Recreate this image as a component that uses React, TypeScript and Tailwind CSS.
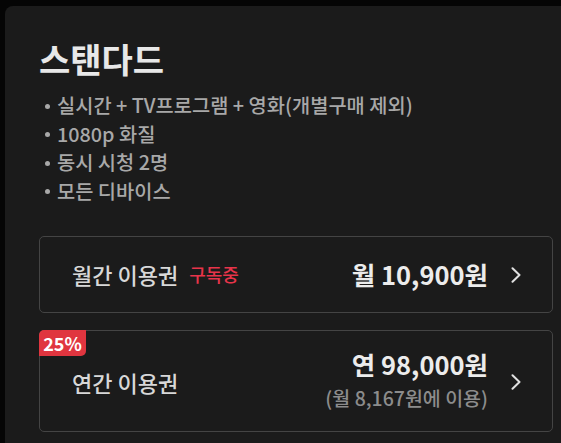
import React from "react";

const Chevron = () => (
  <svg width="10" height="16" viewBox="0 0 10 16" fill="none" className="shrink-0">
    <path d="M1.5 1.2 L8.5 8 L1.5 14.8" stroke="#e0e0e0" strokeWidth="2" strokeLinecap="round" strokeLinejoin="round" />
  </svg>
);

export default function App() {
  const font = { fontFamily: '"Noto Sans CJK KR", "Noto Sans", sans-serif' };
  return (
    <div className="w-[561px] h-[443px] overflow-hidden bg-[#050505]" style={font}>
      <div className="ml-[5px] mt-[6px] w-[582px] h-[460px] rounded-[8px] bg-[#1b1b1b] pt-[29px] pl-[34px] pr-[34px]">
        <h1 className="text-[34px] leading-[48px] font-bold text-[#e8e8e8]">스탠다드</h1>
        <ul className="mt-[8px] text-[19.8px] leading-[28.5px] font-medium text-[#a8a8a8]">
          {["실시간 + TV프로그램 + 영화(개별구매 제외)", "1080p 화질", "동시 시청 2명", "모든 디바이스"].map((t) => (
            <li key={t} className="flex items-center">
              <span className="w-[5px] h-[5px] rounded-full bg-[#a8a8a8] ml-[6px] mr-[7px] mt-[2px]" />
              <span>{t}</span>
            </li>
          ))}
        </ul>
        <div className="mt-[31px] h-[77px] w-[514px] rounded-[5px] border border-[#444444] flex items-center pl-[32px] pr-[31px]">
          <span className="text-[22px] font-medium text-[#d8d8d8]">월간 이용권</span>
          <span className="ml-[11px] text-[18px] font-medium text-[#e8344a]">구독중</span>
          <span className="ml-auto text-[25.5px] font-bold text-[#ececec]">월 10,900원</span>
          <span className="ml-[23px] mt-[1px]"><Chevron /></span>
        </div>
        <div className="relative mt-[17px] h-[102px] w-[514px] rounded-[5px] border border-[#444444] flex items-center pl-[32px] pr-[31px]">
          <div className="absolute -left-px -top-px w-[47px] h-[26px] bg-[#e0353f] rounded-tl-[5px] rounded-br-[5px] flex items-center justify-center text-[18px] font-bold text-white leading-none">
            25%
          </div>
          <span className="text-[22px] font-medium text-[#d8d8d8] mt-[2px]">연간 이용권</span>
          <div className="ml-auto flex flex-col items-end">
            <span className="text-[25.5px] leading-[34px] font-bold text-[#ececec]">연 98,000원</span>
            <span className="text-[19.5px] leading-[34px] font-medium text-[#8c8c8c]">(월 8,167원에 이용)</span>
          </div>
          <span className="ml-[23px] mt-[2px]"><Chevron /></span>
        </div>
      </div>
    </div>
  );
}
